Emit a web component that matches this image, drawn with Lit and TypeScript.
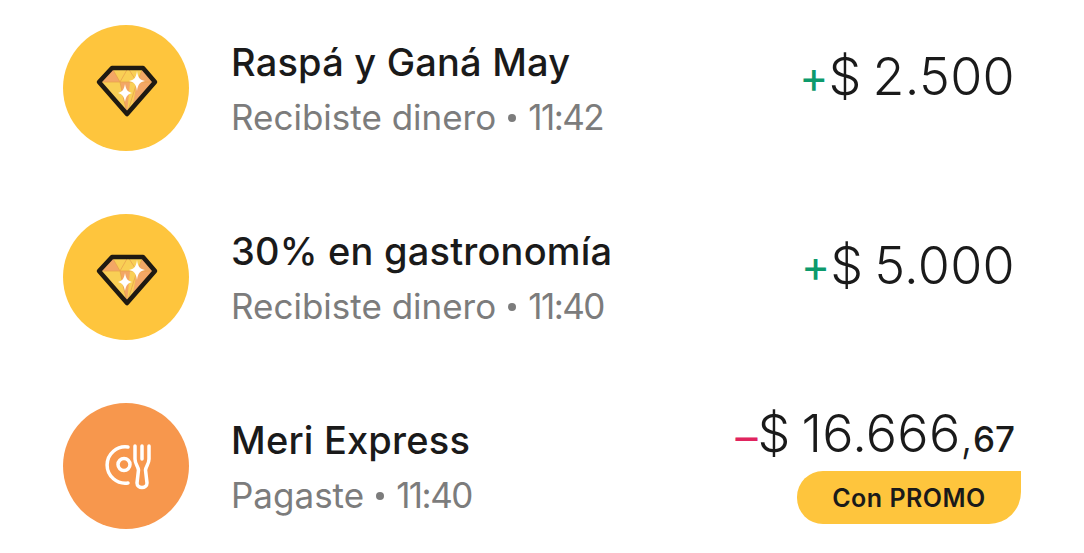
import { LitElement, css, html, svg } from "lit";
import { customElement } from "lit/decorators.js";
import { classMap } from "lit/directives/class-map.js";

type Movement = {
  kind: "gem" | "food";
  title: string;
  detail: string;
  time: string;
  sign: "+" | "–";
  amount: string;
  cents?: string;
  promo?: boolean;
};

const MOVEMENTS: Movement[] = [
  { kind: "gem", title: "Raspá y Ganá May", detail: "Recibiste dinero", time: "11:42", sign: "+", amount: "2.500" },
  { kind: "gem", title: "30% en gastronomía", detail: "Recibiste dinero", time: "11:40", sign: "+", amount: "5.000" },
  { kind: "food", title: "Meri Express", detail: "Pagaste", time: "11:40", sign: "–", amount: "16.666", cents: "67", promo: true },
];

const gem = svg`
  <path d="M36 57 49 43h31l12 14-28 32z" fill="#f9cf55"/>
  <path d="M36 57 49 43l8 14zM80 43l12 14H74zM57 57h10l-3 32zM74 57h18L69 84z" fill="#f3a765"/>
  <path d="M49 43l8 14 8-14 9 14 6-14M36 57h56M57 57l7 32M74 57l-10 32" fill="none" stroke="#e8a24c" stroke-width="0.8"/>
  <path d="M36 57 49 43h31l12 14-28 32z" fill="none" stroke="#1f1a12" stroke-width="4.500" stroke-linejoin="round"/>
  <path d="M74 46c1 7 3 9 8 10-5 1-7 3-8 10-1-7-3-9-8-10 5-1 7-3 8-10zM62 59c1 6 3 8 7 9-4 1-6 3-7 9-1-6-3-8-7-9 4-1 6-3 7-9z" fill="#fff"/>
`;

const food = svg`
  <g fill="none" stroke="#fff" stroke-width="3.500" stroke-linecap="round" stroke-linejoin="round">
    <path d="M65 44a18.200 18.200 0 1 0 0 36"/>
    <circle cx="61" cy="61.500" r="6"/>
    <path d="M72 43v13c0 5 3 7 3.500 11L74 80c0 6 10 6 10 0l-1.500-13c.5-4 3.500-6 3.500-11V43M79 43v13"/>
  </g>
`;

@customElement("app-root")
export class AppRoot extends LitElement {
  static styles = css`
    :host {
      display: block;
      height: 553px;
      overflow: hidden;
      background: #ffffff;
      font-family: "Inter", "Open Sans", sans-serif;
      color: #1a1a1a;
    }

    .list {
      display: flex;
      flex-direction: column;
      gap: 63px;
      padding: 25px 69px 0 63px;
    }

    .row {
      display: grid;
      grid-template-columns: 126px 1fr auto;
      column-gap: 42px;
      height: 126px;
    }

    .avatar {
      width: 126px;
      height: 126px;
      border-radius: 50%;
    }

    .avatar svg {
      display: block;
    }

    .gem {
      background: #fec53d;
    }

    .food {
      background: #f7974d;
    }

    .text {
      padding-top: 14px;
    }

    .title {
      font-size: 38px;
      line-height: 46px;
      font-weight: 500;
      letter-spacing: 0.2px;
    }

    .detail {
      display: flex;
      align-items: center;
      margin-top: 11px;
      font-size: 35px;
      line-height: 42px;
      font-weight: 400;
      color: #7c7c7c;
    }

    .dot {
      width: 8px;
      height: 8px;
      margin: 2px 12px 0 12px;
      border-radius: 50%;
      background: #7c7c7c;
    }

    .time {
      letter-spacing: -1.5px;
    }

    .side {
      display: flex;
      flex-direction: column;
      align-items: flex-end;
      padding-top: 35px;
    }

    .side.with-promo {
      padding-top: 14px;
    }

    .amount {
      display: flex;
      align-items: baseline;
      font-size: 52px;
      line-height: 34px;
      font-weight: 300;
    }

    .value {
      white-space: pre;
      letter-spacing: 0.3px;
      word-spacing: -4px;
    }

    .comma {
      font-size: 44px;
    }

    .sign {
      align-self: center;
      font-size: 44px;
      font-weight: 400;
    }

    .plus {
      color: #0d9a6c;
    }

    .minus {
      color: #e0245e;
    }

    .cents {
      font-size: 35px;
      font-weight: 500;
    }

    .promo {
      display: flex;
      align-items: center;
      justify-content: center;
      box-sizing: border-box;
      width: 224px;
      height: 53px;
      margin: 15px -6px 0 0;
      border-radius: 26px 0 32px 26px;
      background: #fec53d;
      font-size: 25px;
      font-weight: 600;
      letter-spacing: 0.5px;
    }
  `;

  render() {
    return html`
      <main class="list">
        ${MOVEMENTS.map(
          (m) => html`
            <section class="row">
              <div class="avatar ${m.kind}">
                <svg width="126" height="126" viewBox="0 0 126 126">${m.kind === "gem" ? gem : food}</svg>
              </div>
              <div class="text">
                <div class="title">${m.title}</div>
                <div class="detail">
                  <span>${m.detail}</span><span class="dot"></span><span class="time">${m.time}</span>
                </div>
              </div>
              <div class=${classMap({ side: true, "with-promo": !!m.promo })}>
                <div class="amount">
                  <span class="sign ${m.sign === "+" ? "plus" : "minus"}">${m.sign}</span><span class="value">$ ${m.amount}</span>${m.cents
                    ? html`<span class="comma">,</span><span class="cents">${m.cents}</span>`
                    : null}
                </div>
                ${m.promo ? html`<div class="promo">Con PROMO</div>` : null}
              </div>
            </section>
          `
        )}
      </main>
    `;
  }
}
